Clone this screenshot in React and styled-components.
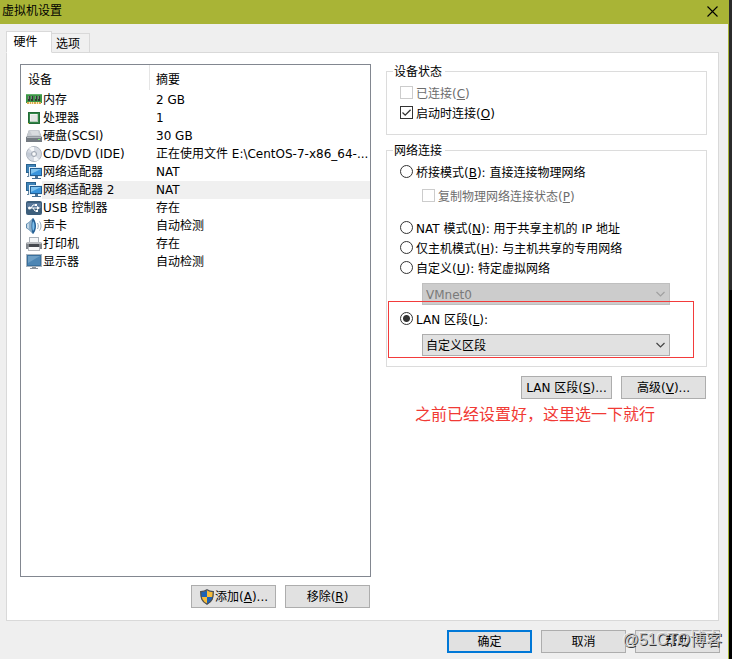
import React, { useState } from "react";
import styled, { createGlobalStyle, css } from "styled-components";

const Global = createGlobalStyle`
  *, *::before, *::after { box-sizing: border-box; }
  body { margin: 0; background: #000; }
  body, button, input, select {
    font-family: "DejaVu Sans", "Noto Sans CJK SC", sans-serif;
    font-size: 12px;
    line-height: 18px;
    color: #000;
  }
`;

const Desktop = styled.div`
  min-height: 100vh;
  display: flex;
  padding-right: 3px;
  background: linear-gradient(#2b2b2b 290px, #000 290px);
`;
const Dialog = styled.main`
  position: relative;
  flex: 1;
  min-width: 0;
  display: flex;
  flex-direction: column;
  background: #efefef;
  border-right: 1px solid #a9b436;
`;
const TitleBar = styled.header`
  height: 24px;
  margin-right: -1px;
  display: flex;
  align-items: center;
  justify-content: space-between;
  padding: 0 11px 2px 2px;
  background: #a9b436;
`;
const Title = styled.h1`
  margin: 0;
  font-size: 12px;
  font-weight: 400;
`;
const CloseButton = styled.button`
  display: flex;
  padding: 0;
  border: 0;
  background: none;
`;
const Content = styled.div`
  flex: 1;
  display: flex;
  flex-direction: column;
  padding: 7px 9px 0 6px;
`;
const TabList = styled.div`
  display: flex;
  align-items: flex-end;
  height: 22px;
  margin-bottom: -1px;
  z-index: 1;
`;
const Tab = styled.button`
  height: 20px;
  width: 38px;
  padding: 1px 5px 0 0;
  border: 1px solid #d9d9d9;
  border-left: 0;
  background: #f0f0f0;
  ${(p) =>
    p.$active &&
    css`
      height: 22px;
      width: 46px;
      padding: 0 7px 0 0;
      border-left: 1px solid #d9d9d9;
      border-bottom-color: #fff;
      background: #fff;
    `}
`;
const Panel = styled.section`
  flex: 1;
  display: grid;
  grid-template-columns: minmax(0, 351fr) minmax(0, 321fr);
  column-gap: 15px;
  padding: 11px 11px 12px 13px;
  background: #fff;
  border: 1px solid #d9d9d9;
`;
const Column = styled.div`
  display: flex;
  flex-direction: column;
`;
const ListBox = styled.div`
  flex: 1;
  border: 1px solid #828790;
  background: #fff;
`;
const DeviceTable = styled.table`
  width: 100%;
  table-layout: fixed;
  border-collapse: collapse;
`;
const HeadCell = styled.th`
  height: 26px;
  width: ${(p) => p.$width || "auto"};
  padding: 3px 0 0 ${(p) => (p.$first ? "7px" : "6px")};
  text-align: left;
  font-weight: 400;
  background: ${(p) =>
    p.$first ? "linear-gradient(#e5e5e5, #e5e5e5) right top / 1px 25px no-repeat" : "none"};
`;
const NameCell = styled.td`
  height: 18px;
  padding: 0 0 0 5px;
`;
const DeviceName = styled.span`
  display: flex;
  align-items: center;
  height: 18px;
  white-space: nowrap;
`;
const DeviceLabel = styled.span`
  flex: 1;
  padding-left: 1px;
  background: ${(p) => (p.$selected ? "#f0f0f0" : "transparent")};
`;
const SummaryCell = styled.td`
  height: 18px;
  padding: 0 0 0 6px;
  overflow: hidden;
  white-space: nowrap;
  background: ${(p) => (p.$selected ? "#f0f0f0" : "transparent")};
`;
const ButtonRow = styled.div`
  display: flex;
  justify-content: flex-end;
  gap: 9px;
  padding-top: ${(p) => p.$top};
  padding-right: ${(p) => p.$right || "1px"};
`;
const Button = styled.button`
  display: flex;
  align-items: center;
  justify-content: center;
  width: ${(p) => (p.$wide ? "91px" : "85px")};
  height: 23px;
  padding: 1px 0 0;
  white-space: nowrap;
  background: #e1e1e1;
  border: ${(p) => (p.$primary ? "2px solid #0078d7" : "1px solid #adadad")};
`;
const Group = styled.fieldset`
  min-width: 0;
  margin: 0 0 ${(p) => p.$gap || "0"};
  padding: ${(p) => p.$padding};
  border: 1px solid #dcdcdc;
`;
const Legend = styled.legend`
  margin-left: 6px;
  padding: 1px 3px 0 1px;
  height: 15px;
  line-height: 15px;
`;
const Option = styled.label`
  display: flex;
  align-items: center;
  gap: 3px;
  height: 20px;
  margin-left: ${(p) => (p.$nested ? "35px" : "13px")};
  margin-top: ${(p) => p.$top || "0"};
  white-space: nowrap;
  color: ${(p) => (p.$muted ? "#6d6d6d" : "#000")};
`;
const OptionText = styled.span`
  padding-top: 4px;
`;
const CheckBox = styled.input`
  appearance: none;
  flex: none;
  width: 13px;
  height: 13px;
  margin: 0;
  border: 1px solid #333;
  background: #fff;
  &:disabled {
    border-color: #ccc;
  }
  &:checked {
    background: url("data:image/svg+xml,%3Csvg xmlns='http://www.w3.org/2000/svg' viewBox='0 0 11 11'%3E%3Cpath d='M1.5 5.5l2.7 2.7L9.6 2.7' fill='none' stroke='%23333' stroke-width='1.3'/%3E%3C/svg%3E");
  }
`;
const Radio = styled.input`
  appearance: none;
  flex: none;
  width: 13px;
  height: 13px;
  margin: 0;
  border: 1px solid #333;
  border-radius: 50%;
  background: #fff;
  &:checked {
    background: radial-gradient(circle, #333 3px, #fff 4px);
  }
`;
const SelectBox = styled.div`
  display: grid;
  margin: ${(p) => p.$top} 36px 0 35px;
`;
const Select = styled.select`
  grid-area: 1 / 1;
  appearance: none;
  height: 22px;
  padding: 1px 20px 0 3px;
  border: 1px solid #adadad;
  border-radius: 0;
  background: #e1e1e1;
  opacity: 1;
  &:disabled {
    color: #7a7a7a;
    background: #ccc;
    border-color: #bfbfbf;
  }
`;
const Chevron = styled.svg`
  grid-area: 1 / 1;
  align-self: center;
  justify-self: end;
  margin-right: 4px;
  pointer-events: none;
  stroke: ${(p) => (p.$muted ? "#a0a0a0" : "#444")};
`;
const Highlight = styled.div`
  position: relative;
  padding-top: 3px;
  &::after {
    content: "";
    position: absolute;
    inset: -4px 12px -2px 1px;
    border: 1px solid #f33b3b;
    pointer-events: none;
  }
`;
const Note = styled.p`
  margin: 4px 0 0 29px;
  font-size: 16px;
  line-height: 24px;
  color: #f13a35;
  white-space: nowrap;
`;
const Footer = styled.footer`
  padding-bottom: 6px;
`;
const Watermark = styled.span`
  position: absolute;
  right: 6px;
  bottom: 7px;
  font: 16px/24px "Liberation Sans", "Noto Sans CJK SC", sans-serif;
  color: #c4c4c4;
  text-shadow: 1px 1px 0 #222, -1px -1px 0 #f4f4f4;
  white-space: nowrap;
  pointer-events: none;
  opacity: 0.9;
`;
const Icon = styled.svg`
  flex: none;
  width: 16px;
  height: 16px;
`;

const icons = {
  memory: (
    <>
      <path d="M0 2h16v9H0z" fill="#3c9446" />
      <path d="M0 2h16v1H0z" fill="#63b46b" />
      <path d="M2 4h2v5H2zM5 4h2v5H5zM9 4h2v5H9zM12 4h2v5h-2z" fill="#333b36" />
      <path d="M2 4h1v3H2zM5 4h1v3H5zM9 4h1v3H9zM12 4h1v3h-1z" fill="#7d8580" />
      <path d="M1 10h14v2H1z" fill="#d9a74c" />
      <path d="M3.500 10v2M5.500 10v2M7.500 10v2M10.500 10v2M12.500 10v2" stroke="#fbe9b4" />
    </>
  ),
  cpu: (
    <>
      <path d="M2 2h12v12H2z" fill="#318647" />
      <path d="M2.500 2.500h11v11h-11z" fill="none" stroke="#236a37" />
      <path d="M4 4h8v8H4z" fill="#b8cbbb" />
      <path d="M4 4h7v7H4z" fill="#f1f1f1" />
      <path d="M5 5h6v6H5z" fill="#e2e5e3" />
      <path d="M2 13h1v1H2z" fill="#f0cf54" />
    </>
  ),
  disk: (
    <>
      <path d="M3 2h10l3 8v4H0v-4z" fill="#969ca3" />
      <path d="M3 2h10l2 6H1z" fill="#c7cbd0" />
      <path d="M4 3h8l1 4H6z" fill="#d9dcdf" />
      <path d="M0 9h16v5H0z" fill="#747b82" />
      <path d="M1 9h14v1H1z" fill="#b3b8bd" />
      <path d="M12 11h2v1h-2z" fill="#79df71" />
    </>
  ),
  disc: (
    <>
      <circle cx="8" cy="8" r="7.500" fill="#d5dae2" stroke="#adb4be" />
      <path d="M8 8L3 2a8 8 0 0 1 5-1z" fill="#f7f8fa" />
      <path d="M8 8l5 6a8 8 0 0 1-5 1z" fill="#f4f6f9" />
      <path d="M8 8L1 6a8 8 0 0 0 1 6z" fill="#c2cad5" />
      <circle cx="8" cy="8" r="2.500" fill="#e8eaed" stroke="#9ca4b0" />
      <circle cx="8" cy="8" r="1" fill="#fff" />
    </>
  ),
  network: (
    <>
      <path d="M0 0h10v9H0z" fill="#28628f" />
      <path d="M1 1h8v7H1z" fill="#3f83b8" />
      <path d="M2 9h3v3H2zM1 12h5v1H1z" fill="#64849f" />
      <path d="M3 3h13v10H3z" fill="#e1f0fa" />
      <path d="M4 4h12v8H4z" fill="#225e93" />
      <path d="M5 5h10v6H5z" fill="#3994dc" />
      <path d="M5 5h10L5 10z" fill="#7fc3ef" />
      <path d="M9 12h3v2H9zM6 14h9v1H6z" fill="#456f94" />
    </>
  ),
  usb: (
    <>
      <rect x="0" y="1" width="16" height="14" rx="2" fill="#3d5e7b" />
      <path d="M1 3h14v5H1z" fill="#57779a" />
      <path d="M3 8h9M5 8l2-3h3M7 8l2 3h2" fill="none" stroke="#fff" />
      <circle cx="3.500" cy="8" r="1.500" fill="#fff" />
      <path d="M11 6l3 2-3 2zM9 4h2v2H9zM10 10h2v2h-2z" fill="#fff" />
    </>
  ),
  sound: (
    <>
      <path d="M0 6l3-2 4-4c3 3 3 13 0 16l-4-4-3-2z" fill="#5b88ac" />
      <path d="M1 6l2-1v6l-2-1z" fill="#c2d7e7" />
      <path d="M3 4l3-2v12l-3-2z" fill="#8baeca" />
      <path d="M7 0c4 4 4 12 0 16-2-4-2-12 0-16z" fill="#245f95" />
      <path d="M7 3c2 2 2 8 0 10-1-2-1-8 0-10z" fill="#7ec0ed" />
      <path d="M11.500 5c1 2 1 4 0 6M13.500 3.500c2 3 2 6 0 9" fill="none" stroke="#91a8bc" />
    </>
  ),
  printer: (
    <>
      <path d="M3 1h10v6H3z" fill="#a9b0b8" />
      <path d="M4 2h8v5H4z" fill="#f5f7f9" />
      <path d="M1 6h14l1 2v5H0V8z" fill="#82878d" />
      <path d="M1 6h14v2H1z" fill="#b9bcc0" />
      <path d="M3 8h10v3H3z" fill="#45494f" />
      <path d="M2 11h12v4H2z" fill="#b5b8bd" />
      <path d="M3 11h10v3H3z" fill="#f9f9fa" />
    </>
  ),
  display: (
    <>
      <path d="M0 0h16v13H0z" fill="#a7b3be" />
      <path d="M1 1h14v11H1z" fill="#39709d" />
      <path d="M2 2h12v9H2z" fill="#4d86b4" />
      <path d="M2 2h12L2 9z" fill="#6e9fc5" />
      <path d="M6 13h4v1H6zM4 14h8v1H4z" fill="#899199" />
    </>
  ),
};

const DEVICES = [
  ["memory", "内存", "2 GB"],
  ["cpu", "处理器", "1"],
  ["disk", "硬盘(SCSI)", "30 GB"],
  ["disc", "CD/DVD (IDE)", "正在使用文件 E:\\CentOS-7-x86_64-..."],
  ["network", "网络适配器", "NAT"],
  ["network", "网络适配器 2", "NAT"],
  ["usb", "USB 控制器", "存在"],
  ["sound", "声卡", "自动检测"],
  ["printer", "打印机", "存在"],
  ["display", "显示器", "自动检测"],
];

function Shield() {
  return (
    <Icon viewBox="0 0 16 16" aria-hidden="true">
      <path d="M8 1C6 2.500 4 3 1.500 3c0 6 1 9.500 6.500 12.500 5.500-3 6.500-6.500 6.500-12.500C12 3 10 2.500 8 1z" fill="#f8bd38" />
      <path d="M8 1C6 2.500 4 3 2 3v5h6zM8 8h6c-.6 3-2.500 5.500-6 7.200z" fill="#1c62b5" />
      <path d="M8 0.800C6 2.300 4 2.700 1.700 2.700c0 6 1 9.800 6.300 12.500 5.300-2.700 6.300-6.500 6.300-12.500C12 2.700 10 2.300 8 0.800z" fill="none" stroke="#4b4f55" strokeWidth="1.3" />
    </Icon>
  );
}

function DropDown({ value, label, muted, top }) {
  return (
    <SelectBox $top={top}>
      <Select aria-label={label} disabled={muted} defaultValue={value}>
        <option>{value}</option>
      </Select>
      <Chevron $muted={muted} width="11" height="8" viewBox="0 0 11 8" fill="none" aria-hidden="true">
        <path d="M1.500 2l4 4 4-4" strokeWidth="1.2" />
      </Chevron>
    </SelectBox>
  );
}

export default function App() {
  const [mode, setMode] = useState("lan");
  const [selected, setSelected] = useState(5);
  const radio = (id) => ({
    type: "radio",
    name: "mode",
    checked: mode === id,
    onChange: () => setMode(id),
  });

  return (
    <Desktop>
      <Global />
      <Dialog>
        <TitleBar>
          <Title>虚拟机设置</Title>
          <CloseButton aria-label="关闭">
            <svg width="11" height="11" viewBox="0 0 11 11" fill="none" stroke="#000" strokeWidth="1.1">
              <path d="M0.500 0.500l10 10M10.500 0.500l-10 10" />
            </svg>
          </CloseButton>
        </TitleBar>
        <Content>
          <TabList role="tablist">
            <Tab role="tab" aria-selected="true" $active>硬件</Tab>
            <Tab role="tab" aria-selected="false">选项</Tab>
          </TabList>
          <Panel>
            <Column>
              <ListBox>
                <DeviceTable>
                  <thead>
                    <tr>
                      <HeadCell $first $width="129px">设备</HeadCell>
                      <HeadCell>摘要</HeadCell>
                    </tr>
                  </thead>
                  <tbody>
                    {DEVICES.map(([icon, name, summary], i) => (
                      <tr key={name} onClick={() => setSelected(i)}>
                        <NameCell>
                          <DeviceName>
                            <Icon viewBox="0 0 16 16" aria-hidden="true">{icons[icon]}</Icon>
                            <DeviceLabel $selected={i === selected}>{name}</DeviceLabel>
                          </DeviceName>
                        </NameCell>
                        <SummaryCell $selected={i === selected}>{summary}</SummaryCell>
                      </tr>
                    ))}
                  </tbody>
                </DeviceTable>
              </ListBox>
              <ButtonRow $top="8px">
                <Button><Shield /><span>添加(<u>A</u>)...</span></Button>
                <Button><span>移除(<u>R</u>)</span></Button>
              </ButtonRow>
            </Column>
            <Column>
              <Group $padding="3px 0 12px" $gap="8px">
                <Legend>设备状态</Legend>
                <Option $muted>
                  <CheckBox type="checkbox" disabled />
                  <OptionText>已连接(<u>C</u>)</OptionText>
                </Option>
                <Option>
                  <CheckBox type="checkbox" defaultChecked />
                  <OptionText>启动时连接(<u>O</u>)</OptionText>
                </Option>
              </Group>
              <Group $padding="3px 0 10px">
                <Legend>网络连接</Legend>
                <Option>
                  <Radio {...radio("bridge")} />
                  <OptionText>桥接模式(<u>B</u>): 直接连接物理网络</OptionText>
                </Option>
                <Option $nested $muted $top="4px">
                  <CheckBox type="checkbox" disabled />
                  <OptionText>复制物理网络连接状态(<u>P</u>)</OptionText>
                </Option>
                <Option $top="12px">
                  <Radio {...radio("nat")} />
                  <OptionText>NAT 模式(<u>N</u>): 用于共享主机的 IP 地址</OptionText>
                </Option>
                <Option>
                  <Radio {...radio("host")} />
                  <OptionText>仅主机模式(<u>H</u>): 与主机共享的专用网络</OptionText>
                </Option>
                <Option>
                  <Radio {...radio("custom")} />
                  <OptionText>自定义(<u>U</u>): 特定虚拟网络</OptionText>
                </Option>
                <DropDown label="虚拟网络" value="VMnet0" muted top="6px" />
                <Highlight>
                  <Option>
                    <Radio {...radio("lan")} />
                    <OptionText>LAN 区段(<u>L</u>):</OptionText>
                  </Option>
                  <DropDown label="LAN 区段" value="自定义区段" top="6px" />
                </Highlight>
              </Group>
              <ButtonRow $top="9px">
                <Button $wide><span>LAN 区段(<u>S</u>)...</span></Button>
                <Button><span>高级(<u>V</u>)...</span></Button>
              </ButtonRow>
              <Note>之前已经设置好，这里选一下就行</Note>
            </Column>
          </Panel>
        </Content>
        <Footer>
          <ButtonRow $top="9px" $right="8px">
            <Button $primary>确定</Button>
            <Button>取消</Button>
            <Button>帮助</Button>
          </ButtonRow>
        </Footer>
        <Watermark>@51CTO博客</Watermark>
      </Dialog>
    </Desktop>
  );
}
